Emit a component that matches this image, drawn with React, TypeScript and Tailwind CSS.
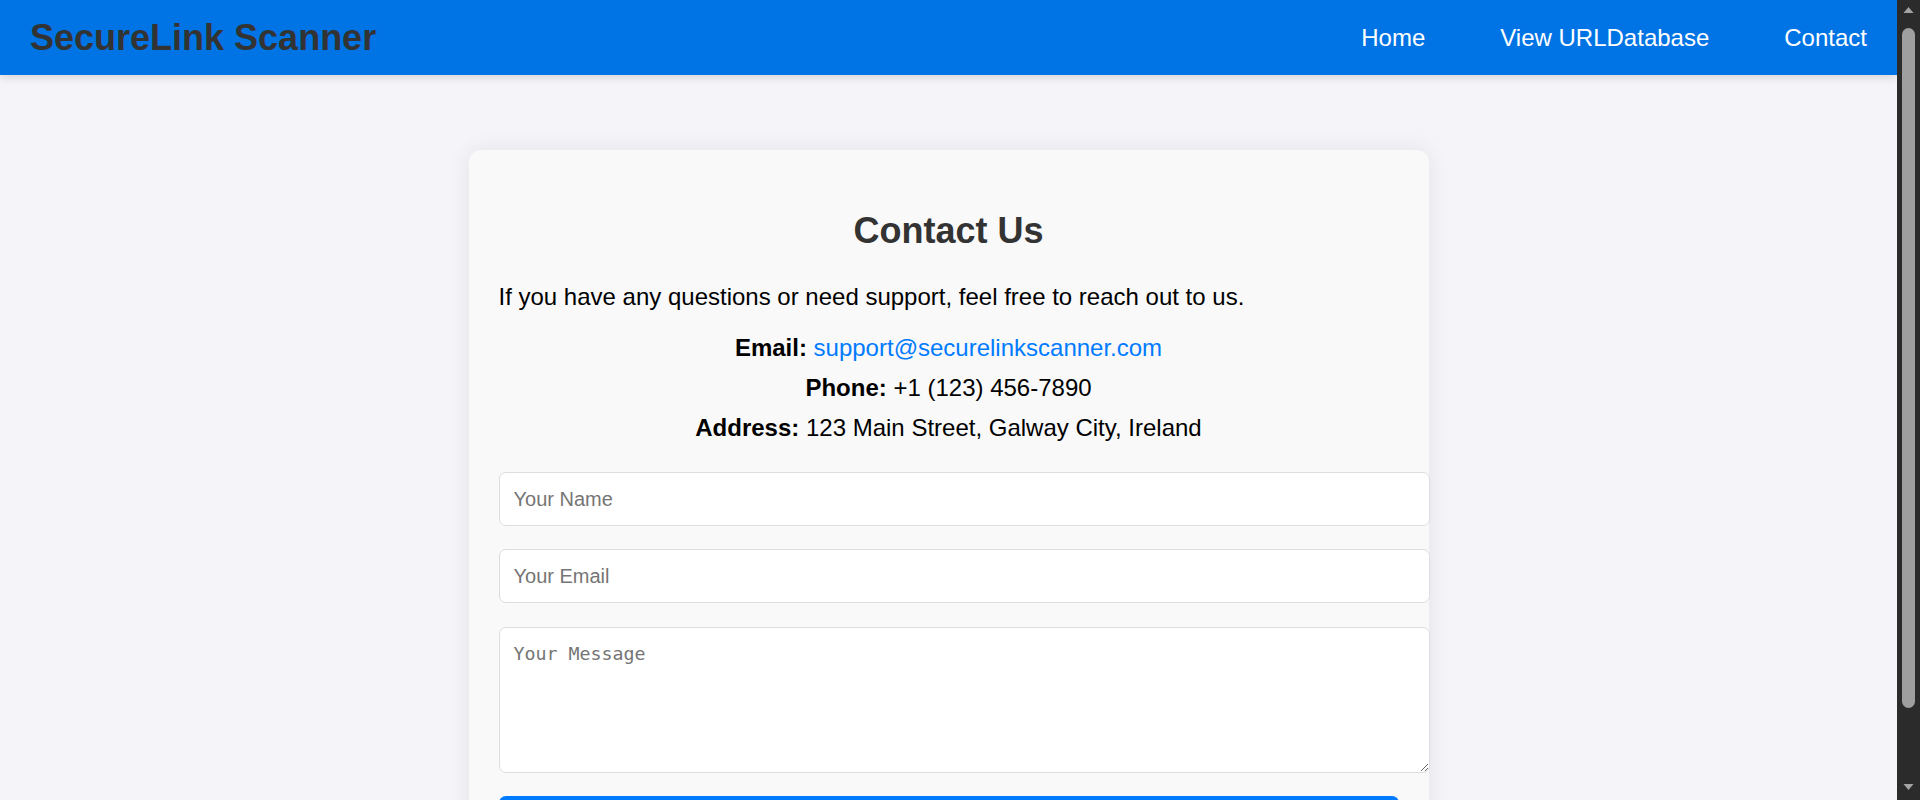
import React from "react";

function FakeScrollbar() {
  return (
    <div className="flex h-full w-[23px] shrink-0 flex-col items-center bg-[#2b2b2b]">
      <svg width="23" height="20" viewBox="0 0 23 20" className="shrink-0">
        <path d="M6.5 13 L11.5 7 L16.5 13 Z" fill="#a3a3a3" />
      </svg>
      <div className="mt-[8px] h-[680px] w-[13px] rounded-full bg-[#9f9f9f]" />
      <div className="flex-1" />
      <svg width="23" height="20" viewBox="0 0 23 20" className="mb-[4px] shrink-0">
        <path d="M6.5 8 L11.5 14 L16.5 8 Z" fill="#a3a3a3" />
      </svg>
    </div>
  );
}

export default function App() {
  return (
    <div
      className="flex h-screen overflow-hidden bg-[#f4f4f9] text-black"
      style={{ fontFamily: '"Liberation Sans", Arial, sans-serif' }}
    >
      <div className="min-w-0 flex-1 overflow-hidden">
        <header className="relative flex h-[75px] items-center justify-between bg-[#0074e4] px-[30px] shadow-[0_3px_8px_rgba(0,0,0,0.12)]">
          <h1 className="text-[36px] font-bold leading-[normal] text-[#333]">SecureLink Scanner</h1>
          <nav className="flex gap-[75px] text-[24px] leading-[normal] text-white">
            <a href="#">Home</a>
            <a href="#">View URLDatabase</a>
            <a href="#">Contact</a>
          </nav>
        </header>

        <main className="pt-[75px] pb-[75px]">
          <div className="mx-auto w-[960px] rounded-[12px] bg-[#f9f9f9] p-[30px] shadow-[0_0_22px_rgba(0,0,0,0.08)]">
            <h2 className="mt-[30px] mb-[31px] text-center text-[36px] font-bold leading-[normal] text-[#333]">
              Contact Us
            </h2>
            <p className="mb-[23px] text-[24px] leading-[normal]">
              If you have any questions or need support, feel free to reach out to us.
            </p>
            <div className="flex flex-col gap-[12px] text-center text-[24px] leading-[normal]">
              <p>
                <strong>Email:</strong>{" "}
                <a href="#" className="text-[#007bff]">support@securelinkscanner.com</a>
              </p>
              <p>
                <strong>Phone:</strong> +1 (123) 456-7890
              </p>
              <p>
                <strong>Address:</strong> 123 Main Street, Galway City, Ireland
              </p>
            </div>

            <form className="mt-[30px] flex flex-col" onSubmit={(e) => e.preventDefault()}>
              <input
                type="text"
                placeholder="Your Name"
                className="mb-[23px] h-[54px] w-[calc(100%+31px)] rounded-[7px] border border-[#ddd] bg-white px-[14px] text-[20px] outline-none placeholder:text-[#757575]"
              />
              <input
                type="email"
                placeholder="Your Email"
                className="mb-[24px] h-[54px] w-[calc(100%+31px)] rounded-[7px] border border-[#ddd] bg-white px-[14px] text-[20px] outline-none placeholder:text-[#757575]"
              />
              <textarea
                placeholder="Your Message"
                className="mb-[23px] h-[146px] w-[calc(100%+31px)] rounded-[7px] border border-[#ddd] bg-white px-[14px] py-[15px] text-[18.3px] leading-[normal] outline-none placeholder:text-[#757575]"
                style={{ fontFamily: '"DejaVu Sans Mono", "Liberation Mono", monospace' }}
              />
              <button
                type="submit"
                className="h-[54px] w-full rounded-[7px] bg-[#007bff] text-[24px] text-white"
              >
                Send Message
              </button>
            </form>
          </div>
        </main>
      </div>
      <FakeScrollbar />
    </div>
  );
}
